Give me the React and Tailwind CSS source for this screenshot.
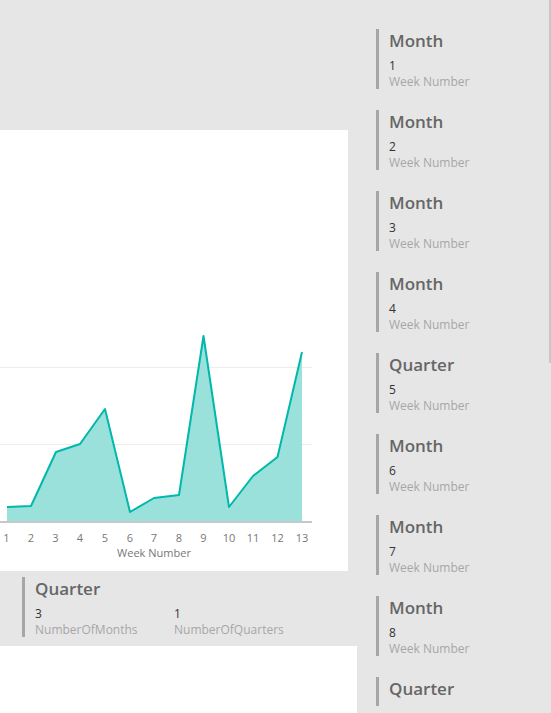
import React from "react";

const pts = [
  [7, 507], [31, 506], [56, 452], [80, 444], [105, 409], [130, 512], [154, 498],
  [179, 495], [203.5, 336], [229, 507], [253, 476], [277.5, 457], [302, 352],
];
const tickX = [6.5, 31, 55.5, 80, 105, 130, 154, 179, 203.5, 229, 253, 277.5, 302];

const cards = [
  ["Month", "1"], ["Month", "2"], ["Month", "3"], ["Month", "4"], ["Quarter", "5"],
  ["Month", "6"], ["Month", "7"], ["Month", "8"], ["Quarter", "9"],
];

function Card({ title, items }) {
  return (
    <div className="h-[60px] shrink-0 border-l-[3px] border-[#a6a6a6] pl-[10px] pt-[1px]">
      <div className="text-[17px] leading-[22px] font-semibold text-[#666666]">{title}</div>
      <div className="mt-[6px] flex">
        {items.map(([v, l], i) => (
          <div key={i} className="w-[139px] shrink-0">
            <div className="text-[12px] leading-[16px] text-[#333333]">{v}</div>
            <div className="text-[12px] leading-[16px] text-[#a6a6a6] whitespace-nowrap">{l}</div>
          </div>
        ))}
      </div>
    </div>
  );
}

function Chart() {
  const p = pts.map(([x, y]) => [x, y - 130]);
  const line = p.map(([x, y], i) => `${i ? "L" : "M"}${x} ${y}`).join(" ");
  const area = `${line} L302 391 L7 391 Z`;
  return (
    <svg width="348" height="441" viewBox="0 0 348 441" className="block">
      <line x1="0" y1="237.5" x2="312" y2="237.5" stroke="#ececec" strokeWidth="1" />
      <line x1="0" y1="314.5" x2="312" y2="314.5" stroke="#ececec" strokeWidth="1" />
      <path d={area} fill="#99e1da" />
      <path d={line} fill="none" stroke="#01b8aa" strokeWidth="2" strokeLinejoin="round" />
      <line x1="0" y1="392" x2="312" y2="392" stroke="#c8c8c8" strokeWidth="2" />
      {tickX.map((x, i) => (
        <text key={i} x={x} y="412" textAnchor="middle" fontSize="11" fill="#777777" fontFamily="'Open Sans', sans-serif">
          {i + 1}
        </text>
      ))}
      <text x="154" y="427" textAnchor="middle" fontSize="11" fill="#777777" fontFamily="'Open Sans', sans-serif">
        Week Number
      </text>
    </svg>
  );
}

export default function App() {
  return (
    <div className="flex w-[551px] h-[713px] overflow-hidden bg-[#e6e6e6]" style={{ fontFamily: "'Open Sans', sans-serif" }}>
      <div className="w-[357px] shrink-0 flex flex-col">
        <div className="h-[130px] shrink-0" />
        <div className="w-[348px] h-[441px] shrink-0 bg-white">
          <Chart />
        </div>
        <div className="h-[75px] shrink-0 pl-[22px] pt-[6px]">
          <Card title="Quarter" items={[["3", "NumberOfMonths"], ["1", "NumberOfQuarters"]]} />
        </div>
        <div className="flex-1 bg-white" />
      </div>
      <div className="relative flex-1 h-[706px] overflow-hidden pl-[19px] pt-[29px] flex flex-col gap-[21px]">
        {cards.map(([t, v], i) => (
          <Card key={i} title={t} items={[[v, "Week Number"]]} />
        ))}
        <div className="absolute right-0 top-0 w-[2px] h-[363px] bg-[#c8c8c8]" />
      </div>
    </div>
  );
}
